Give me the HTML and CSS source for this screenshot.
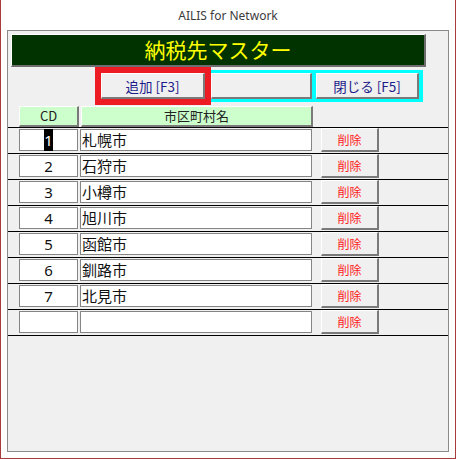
FILE: index.html
```html
<!DOCTYPE html>
<html lang="ja">
  <head>
    <meta charset="UTF-8" />
    <meta name="viewport" content="width=device-width, initial-scale=1.0" />
    <title>AILIS for Network</title>
    <link rel="stylesheet" href="styles.css">
  </head>
  <body>
    <div class="window">
      <div class="titlebar">AILIS for Network</div>
      <div class="panel">
        <div class="form-title">納税先マスター</div>
        <div class="toolbar">
          <div class="focus-red">
            <button class="btn btn-cmd" type="button">追加 [F3]</button>
          </div>
          <div class="focus-cyan">
            <button class="btn btn-blank" type="button"></button>
            <button class="btn btn-close" type="button">閉じる [F5]</button>
          </div>
        </div>
        <div class="head-row">
          <div class="head-cell head-cd">CD</div>
          <div class="head-cell head-name">市区町村名</div>
        </div>
        <div class="rows">
          <div class="row">
            <div class="box box-cd"><span class="sel">1</span></div>
            <div class="box box-name">札幌市</div>
            <button class="btn btn-del" type="button">削除</button>
          </div>
          <div class="row">
            <div class="box box-cd">2</div>
            <div class="box box-name">石狩市</div>
            <button class="btn btn-del" type="button">削除</button>
          </div>
          <div class="row">
            <div class="box box-cd">3</div>
            <div class="box box-name">小樽市</div>
            <button class="btn btn-del" type="button">削除</button>
          </div>
          <div class="row">
            <div class="box box-cd">4</div>
            <div class="box box-name">旭川市</div>
            <button class="btn btn-del" type="button">削除</button>
          </div>
          <div class="row">
            <div class="box box-cd">5</div>
            <div class="box box-name">函館市</div>
            <button class="btn btn-del" type="button">削除</button>
          </div>
          <div class="row">
            <div class="box box-cd">6</div>
            <div class="box box-name">釧路市</div>
            <button class="btn btn-del" type="button">削除</button>
          </div>
          <div class="row">
            <div class="box box-cd">7</div>
            <div class="box box-name">北見市</div>
            <button class="btn btn-del" type="button">削除</button>
          </div>
          <div class="row">
            <div class="box box-cd"></div>
            <div class="box box-name"></div>
            <button class="btn btn-del" type="button">削除</button>
          </div>
        </div>
      </div>
    </div>
  </body>
</html>
```

FILE: styles.css
```css
body {
  margin: 0;
  background: #fff;
  font-family: "Noto Sans", "Noto Sans CJK JP", sans-serif;
}
.window {
  width: 456px;
  height: 459px;
  box-sizing: border-box;
  border: 1px solid #a83b3b;
  border-top: none;
  display: flex;
  flex-direction: column;
}
.titlebar {
  height: 30px;
  line-height: 32px;
  text-align: center;
  font-size: 12px;
  color: #3c3c3c;
}
.panel {
  margin: 0 6px;
  height: 422px;
  box-sizing: border-box;
  border: 1px solid #8a8a8a;
  background: #f0f0f0;
  display: flex;
  flex-direction: column;
}
.form-title {
  margin: 3px 0 0 3px;
  width: 415px;
  height: 33px;
  box-sizing: border-box;
  background: #003300;
  border-top: 1px solid #fff;
  border-left: 1px solid #fff;
  border-right: 2px solid #6e6e6e;
  border-bottom: 2px solid #6e6e6e;
  color: #ffff00;
  font-family: "Noto Sans CJK JP", sans-serif;
  font-size: 21px;
  line-height: 29px;
  text-align: center;
}
.toolbar {
  display: flex;
  align-items: center;
  margin-left: 87px;
}
.btn {
  margin: 0;
  padding: 0;
  height: 26px;
  box-sizing: border-box;
  background: #f0f0f0;
  border-top: 1px solid #fff;
  border-left: 1px solid #fff;
  border-right: 2px solid #7a7a7a;
  border-bottom: 2px solid #7a7a7a;
  font-family: "Noto Sans CJK JP", sans-serif;
  font-size: 13.5px;
  color: #1c1c8a;
}
.focus-red {
  border: 6px solid #ed1c24;
  display: flex;
}
.btn-cmd {
  width: 104px;
}
.focus-cyan {
  display: flex;
  gap: 4px;
  background: #00ffff;
  border-top: 3px solid #00ffff;
  border-bottom: 3px solid #00ffff;
  border-right: 4px solid #00ffff;
}
.btn-blank {
  width: 101px;
}
.btn-close {
  width: 103px;
}
.head-row {
  display: flex;
  gap: 2px;
  margin: 1px 0 0 11px;
}
.head-cell {
  height: 21px;
  box-sizing: border-box;
  background: #ccffcc;
  border-top: 1px solid #fff;
  border-left: 1px solid #fff;
  border-right: 2px solid #7a7a7a;
  border-bottom: 2px solid #7a7a7a;
  font-family: "Noto Sans CJK JP", sans-serif;
  font-size: 13px;
  line-height: 18px;
  text-align: center;
  color: #222;
}
.head-cd {
  width: 60px;
}
.head-name {
  width: 232px;
}
.rows {
  border-bottom: 1px solid #000;
}
.row {
  display: flex;
  align-items: flex-start;
  height: 26px;
  box-sizing: border-box;
  border-top: 1px solid #000;
  padding-left: 11px;
}
.box {
  margin-top: 1px;
  height: 22px;
  box-sizing: border-box;
  background: #fff;
  border: 1px solid #858585;
  font-family: "Noto Sans CJK JP", sans-serif;
  font-size: 15px;
  line-height: 20px;
  color: #111;
}
.box-cd {
  width: 59px;
  text-align: center;
  font-family: "Noto Sans", sans-serif;
}
.box-name {
  width: 232px;
  margin-left: 2px;
  padding-left: 1px;
}
.sel {
  background: #000;
  color: #fff;
  padding: 1px 0;
}
.btn-del {
  margin-left: 9px;
  width: 58px;
  height: 24px;
  font-size: 12px;
  color: #ff1a1a;
}
```
